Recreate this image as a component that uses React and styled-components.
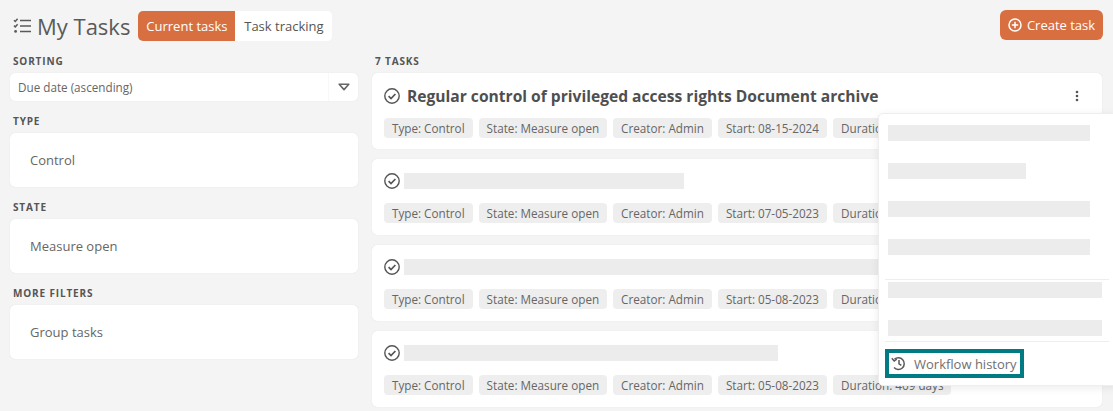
import React from "react";
import styled, { createGlobalStyle } from "styled-components";

const Global = createGlobalStyle`
  html, body { margin: 0; padding: 0; height: 411px; overflow: hidden; background: #f4f4f4; }
  body { font-family: "Open Sans", "Liberation Sans", sans-serif; color: #555; }
`;

const Page = styled.div`
  position: relative;
  width: 1113px;
  height: 411px;
  overflow: hidden;
  box-sizing: border-box;
  padding: 10px 10px 0 10px;
`;
const Header = styled.header`
  display: flex;
  align-items: flex-start;
  height: 31px;
  margin-bottom: 13px;
`;
const Title = styled.h1`
  display: flex;
  align-items: center;
  gap: 5px;
  margin: 1px 7px 0 3px;
  height: 30px;
  font-size: 22px;
  font-weight: 400;
  color: #5a5a5a;
  white-space: nowrap;
`;
const Tabs = styled.div`
  display: flex;
  height: 30px;
  margin-top: 1px;
  margin-left: 1px;
  border-radius: 5px;
  overflow: hidden;
  background: #fff;
`;
const Tab = styled.div`
  width: 97px;
  display: flex;
  align-items: center;
  justify-content: center;
  font-size: 13px;
  color: ${(p) => (p.$active ? "#fff" : "#555")};
  background: ${(p) => (p.$active ? "#d86f41" : "#fff")};
`;
const CreateButton = styled.button`
  margin-left: auto;
  width: 103px;
  height: 30px;
  border: 0;
  padding: 0;
  border-radius: 6px;
  background: #d86f41;
  color: #fff;
  display: flex;
  align-items: center;
  justify-content: center;
  gap: 5px;
  font: 400 13px "Open Sans", sans-serif;
`;
const Columns = styled.div`
  display: grid;
  grid-template-columns: 348px 730px;
  gap: 14px;
`;
const Sidebar = styled.aside`
  display: flex;
  flex-direction: column;
`;
const Label = styled.div`
  height: 13px;
  margin: 1px 0 5px 3px;
  font-size: 10px;
  line-height: 13px;
  font-weight: 700;
  letter-spacing: 0.85px;
  color: #555;
  text-transform: uppercase;
`;
const Select = styled.div`
  height: 28px;
  margin-bottom: 13px;
  display: flex;
  align-items: center;
  justify-content: space-between;
  background: #fff;
  border-radius: 5px;
  box-shadow: 0 0 1px rgba(0, 0, 0, 0.12);
  font-size: 11.7px;
  color: #666;
  padding-left: 8px;
`;
const Caret = styled.div`
  width: 29px;
  height: 100%;
  border-left: 1px solid #f8f8f8;
  display: flex;
  align-items: center;
  justify-content: center;
`;
const FilterCard = styled.div`
  height: 54px;
  margin-bottom: 13px;
  box-sizing: border-box;
  padding: 0 0 1px 20px;
  display: flex;
  align-items: center;
  background: #fff;
  border-radius: 5px;
  box-shadow: 0 0 1px rgba(0, 0, 0, 0.15);
  font-size: 13px;
  color: #666;
`;
const TaskList = styled.section`
  display: flex;
  flex-direction: column;
  gap: 10px;
`;
const Task = styled.article`
  height: 76px;
  box-sizing: border-box;
  padding: 14px 12px 0 12px;
  background: #fff;
  border-radius: 5px;
  box-shadow: 0 0 1px rgba(0, 0, 0, 0.15);
`;
const TaskHead = styled.div`
  display: flex;
  align-items: center;
  height: 16px;
  margin-bottom: 14px;
  margin-top: ${(p) => (p.$big ? "1px" : "0")};
`;
const TaskTitle = styled.div`
  margin-left: 7px;
  font-size: 15.6px;
  font-weight: 700;
  color: #4f4f4f;
  white-space: nowrap;
`;
const Skeleton = styled.div`
  width: ${(p) => p.$w}px;
  height: 16px;
  background: #ececec;
  margin-left: ${(p) => p.$ml || 0}px;
`;
const Chips = styled.div`
  display: flex;
  gap: 6px;
`;
const Chip = styled.span`
  height: 20px;
  padding: 0 8px;
  display: flex;
  align-items: center;
  border-radius: 4px;
  background: #eeeeee;
  font-size: 11.7px;
  color: #666;
  white-space: nowrap;
`;
const Kebab = styled.div`
  margin-left: auto;
  margin-right: 11px;
  display: flex;
`;
const Menu = styled.div`
  position: absolute;
  left: 878px;
  top: 113px;
  width: 240px;
  height: 273px;
  box-sizing: border-box;
  background: #fff;
  border: 1px solid #eeeeee;
  border-radius: 5px;
  box-shadow: 0 2px 8px rgba(0, 0, 0, 0.08);
`;
const MenuGroup = styled.div`
  display: flex;
  flex-direction: column;
  gap: 22px;
  padding: ${(p) => p.$pad};
`;
const Divider = styled.hr`
  margin: 0 8px 0 6px;
  border: 0;
  height: 1px;
  background: #eeeeee;
`;
const HistoryItem = styled.div`
  width: 139px;
  height: 29px;
  box-sizing: border-box;
  margin: 7px 0 0 6px;
  border: 4px solid #007b83;
  display: flex;
  align-items: center;
  gap: 7px;
  padding-left: 2px;
  font-size: 13px;
  color: #6f6f6f;
  white-space: nowrap;
`;

const ListIcon = () => (
  <svg width="19" height="18" viewBox="0 0 19 18" fill="none" stroke="#5a5a5a" strokeWidth="1.5">
    <path d="M1 3.2l1.3 1.3L4.6 1.8M1 8.6l1.3 1.3 2.3-2.7" />
    <circle cx="2.6" cy="14.4" r="1.4" fill="#5a5a5a" stroke="none" />
    <path d="M7 3.5h11M7 9h11M7 14.5h11" />
  </svg>
);
const CheckCircle = () => (
  <svg width="16" height="16" viewBox="0 0 16 16" fill="none" stroke="#555" strokeWidth="1.4" style={{ flexShrink: 0 }}>
    <circle cx="8" cy="8" r="7.2" />
    <path d="M4.6 8.2l2.4 2.4 4.4-4.6" strokeWidth="1.7" />
  </svg>
);
const PlusCircle = () => (
  <svg width="14" height="14" viewBox="0 0 14 14" fill="none" stroke="#fff" strokeWidth="1.5">
    <circle cx="7" cy="7" r="6" />
    <path d="M7 3.8v6.4M3.8 7h6.4" />
  </svg>
);
const Dots = () => (
  <svg width="4" height="12" viewBox="0 0 4 12" fill="#555">
    <circle cx="2" cy="2" r="1.3" />
    <circle cx="2" cy="6" r="1.3" />
    <circle cx="2" cy="10" r="1.3" />
  </svg>
);
const Triangle = () => (
  <svg width="12" height="8" viewBox="0 0 12 8" fill="none" stroke="#666" strokeWidth="1.6" strokeLinejoin="round">
    <path d="M1.2 1.2h9.6L6 6.6z" />
  </svg>
);
const HistoryIcon = () => (
  <svg width="16" height="15" viewBox="0 0 16 15" fill="none" stroke="#5a5a5a" strokeWidth="1.5">
    <path d="M3.4 3.2A5.9 5.9 0 1 1 3 11.6" />
    <path d="M.8 2.2l2.4 2.8 2.6-1.8" />
    <path d="M8 4v3.8l2.4 1.6" />
  </svg>
);

const tasks = [
  { start: "08-15-2024", title: "Regular control of privileged access rights Document archive", duration: "Duration: 469 days" },
  { start: "07-05-2023", skeleton: 280, duration: "Duration: 469 days" },
  { start: "05-08-2023", skeleton: 620, duration: "Duration: 469 days" },
  { start: "05-08-2023", skeleton: 374, duration: "Duration: 469 days" },
];

export default function App() {
  return (
    <Page>
      <Global />
      <Header>
        <Title>
          <ListIcon />
          My Tasks
        </Title>
        <Tabs>
          <Tab $active>Current tasks</Tab>
          <Tab>Task tracking</Tab>
        </Tabs>
        <CreateButton>
          <PlusCircle />
          Create task
        </CreateButton>
      </Header>
      <Columns>
        <Sidebar>
          <Label>Sorting</Label>
          <Select>
            Due date (ascending)
            <Caret>
              <Triangle />
            </Caret>
          </Select>
          <Label>Type</Label>
          <FilterCard>Control</FilterCard>
          <Label>State</Label>
          <FilterCard>Measure open</FilterCard>
          <Label>More filters</Label>
          <FilterCard>Group tasks</FilterCard>
        </Sidebar>
        <div>
          <Label>7 tasks</Label>
          <TaskList>
            {tasks.map((t) => (
              <Task key={t.start + (t.skeleton || 0)}>
                <TaskHead $big={!!t.title}>
                  <CheckCircle />
                  {t.title ? <TaskTitle>{t.title}</TaskTitle> : <Skeleton $w={t.skeleton} $ml={4} />}
                  {t.title && (
                    <Kebab>
                      <Dots />
                    </Kebab>
                  )}
                </TaskHead>
                <Chips>
                  <Chip>Type: Control</Chip>
                  <Chip>State: Measure open</Chip>
                  <Chip>Creator: Admin</Chip>
                  <Chip>Start: {t.start}</Chip>
                  <Chip>{t.duration}</Chip>
                </Chips>
              </Task>
            ))}
          </TaskList>
        </div>
      </Columns>
      <Menu>
        <MenuGroup $pad="11px 9px 24px 9px">
          <Skeleton $w={202} />
          <Skeleton $w={138} />
          <Skeleton $w={202} />
          <Skeleton $w={202} />
        </MenuGroup>
        <Divider />
        <MenuGroup $pad="2px 9px 5px 9px">
          <Skeleton $w={214} />
          <Skeleton $w={214} />
        </MenuGroup>
        <Divider />
        <HistoryItem>
          <HistoryIcon />
          Workflow history
        </HistoryItem>
      </Menu>
    </Page>
  );
}
